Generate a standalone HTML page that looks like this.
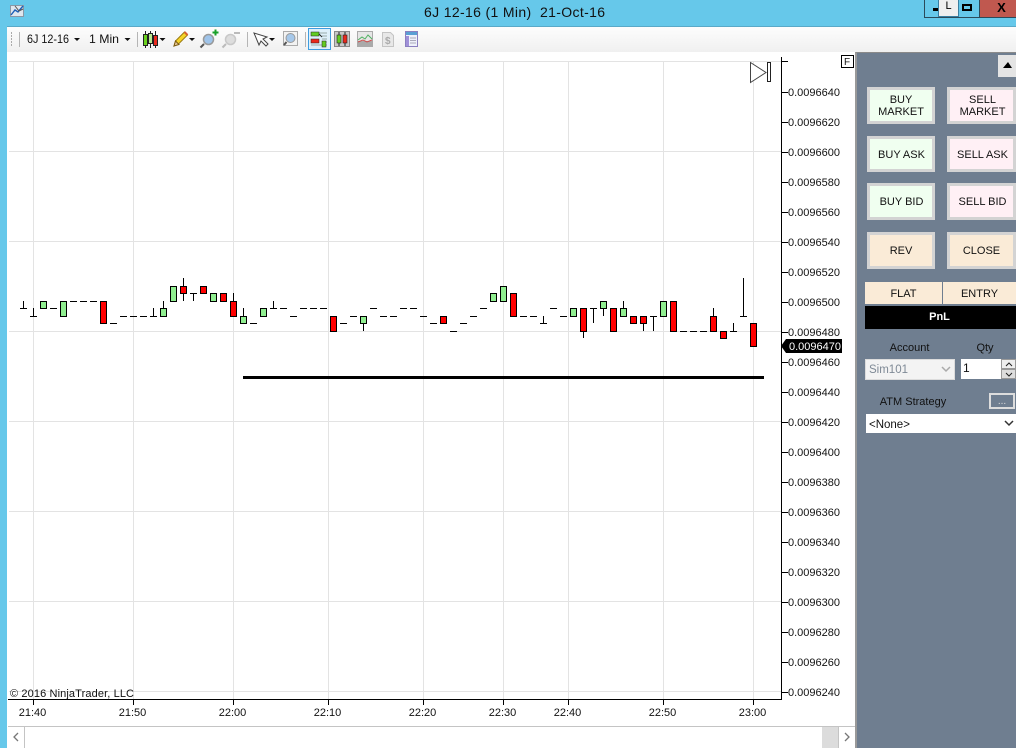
<!DOCTYPE html>
<html><head><meta charset="utf-8"><title>6J 12-16 (1 Min) 21-Oct-16</title>
<style>
html,body{margin:0;padding:0;width:1016px;height:748px;overflow:hidden;background:#fff;font-family:"Liberation Sans",sans-serif;color:#000}
.a{position:absolute;box-sizing:border-box}
.btn{position:absolute;box-sizing:border-box;border:3px solid #d3d3d3;outline:0;display:flex;align-items:center;justify-content:center;text-align:center;font-size:11px;line-height:12px;color:#111}
.g{background:#f0fff0}.p{background:#fff0f5}.o{background:#faebd7}
.lab{position:absolute;font-size:11px;color:#111;text-align:center;line-height:13px}
svg text{font-family:"Liberation Sans",sans-serif}
</style></head><body>
<div class="a" style="left:0;top:0;width:1016px;height:27px;background:#66c8ea;border-bottom:1px solid #5aa9c8"></div>
<div class="a" style="left:0;top:0;width:7px;height:748px;background:#66c8ea"></div>
<div class="a" style="left:7px;top:27px;width:1009px;height:25px;background:linear-gradient(#fdfdfd,#f0f0f0)"></div>
<div class="a" style="left:424px;top:4px;font-size:14px;line-height:16px;white-space:pre;color:#111;letter-spacing:.35px">6J 12-16 (1 Min)  21-Oct-16</div>

<!-- window controls -->
<div class="a" style="left:924px;top:0;width:55px;height:18px;border:1px solid #2b4a5a;border-top:0;border-right:0"></div>
<div class="a" style="left:933px;top:8px;width:5px;height:3px;background:#000"></div>
<div class="a" style="left:938px;top:0;width:21px;height:17px;background:#efefef;border:1px solid #3a7ea0;border-top:0;font-size:11px;text-align:center;line-height:13px">L</div>
<div class="a" style="left:962px;top:4px;width:10px;height:7px;border:2px solid #000"></div>
<div class="a" style="left:979px;top:0;width:37px;height:18px;background:#c0584f;border-left:1px solid #2b4a5a;border-bottom:1px solid #2b4a5a;font:bold 13px/15px 'Liberation Sans',sans-serif;text-align:center;padding-left:7px">X</div>

<!-- app icon + toolbar -->
<svg class="a" style="left:0;top:0" width="430" height="52" viewBox="0 0 430 52">
<rect x="10.5" y="5.5" width="13" height="11" fill="#dfe6ee" stroke="#8a97a5"/>
<path d="M11 15l4-5 3 2 5-6" fill="none" stroke="#1c5fb8" stroke-width="1.4"/>
<path d="M15 6l4 5 4-2" fill="none" stroke="#555" stroke-width="1"/>
<path d="M11 32h1v2h-1zM11 35h1v2h-1zM11 38h1v2h-1zM11 41h1v2h-1zM11 44h1v2h-1z" fill="#aaa"/>
<path d="M19.5 32v15M137.5 32v15M247.5 32v15M305.5 32v15" stroke="#b5b5b5"/>
<text x="27" y="43" font-size="12" fill="#111" textLength="42" lengthAdjust="spacingAndGlyphs">6J 12-16</text>
<path d="M74 38h6l-3 3z" fill="#111"/>
<text x="89" y="43" font-size="12" fill="#111" textLength="30" lengthAdjust="spacingAndGlyphs">1 Min</text>
<path d="M124.500 38h6l-3 3z" fill="#111"/>
<!-- candles icon -->
<path d="M145.500 31v17M150.500 31v17M155.500 31v17" stroke="#222" stroke-width="1"/>
<rect x="143.500" y="34.500" width="4" height="11" fill="#6bd21e" stroke="#222"/>
<rect x="148.500" y="33.500" width="4" height="10" fill="#b8e890" stroke="#222"/>
<rect x="153.500" y="35.500" width="4" height="10" fill="#e92a1e" stroke="#222"/>
<path d="M159.500 38h6l-3 3z" fill="#111"/>
<!-- pencil -->
<path d="M174 46l1.500-5 9-9 3 3-9 9z" fill="#f5d327" stroke="#9a7a10"/>
<path d="M174 46l1.500-5 3.500 3.500z" fill="#e9c998" stroke="#7a5a10"/>
<path d="M184.500 32l3 3" stroke="#d86030" stroke-width="2"/>
<path d="M189 38h6l-3 3z" fill="#111"/>
<!-- zoom in -->
<circle cx="208.500" cy="39.500" r="5" fill="#9fc4ea" stroke="#9a9a9a" stroke-width="1.500"/>
<path d="M204 44l-3.500 3.500" stroke="#555" stroke-width="2"/>
<path d="M212.500 32.500h6M215.500 29.500v6" stroke="#18a028" stroke-width="2"/>
<!-- zoom out -->
<circle cx="230.500" cy="39.500" r="5" fill="#ddd" stroke="#c8c8c8" stroke-width="1.500"/>
<path d="M226 44l-3.500 3.500" stroke="#bbb" stroke-width="2"/>
<path d="M234 33h6" stroke="#bbb" stroke-width="2"/>
<!-- cursor -->
<path d="M254 33l5 12 2-4 5 5 2-2-5-5 4-2z" fill="#fff" stroke="#444"/>
<path d="M269 38h6l-3 3z" fill="#111"/>
<!-- find -->
<rect x="283.500" y="31.500" width="14" height="14" fill="#f2f2f2" stroke="#aaa"/>
<circle cx="290.500" cy="38" r="4.500" fill="#a6c8ea" stroke="#999"/>
<path d="M286.500 42l-2.500 3" stroke="#555" stroke-width="2"/>
<!-- active -->
<rect x="308.500" y="28.500" width="22" height="21" fill="#dff0fb" stroke="#3f9de0"/>
<path d="M311 33h16M322 36h5M322 39h5M322 42h5M311 45h16" stroke="#9aa" stroke-width="1"/>
<rect x="311" y="32" width="8" height="4" fill="#62cc22" stroke="#222" stroke-width=".5"/>
<path d="M319 34l3 3" stroke="#222"/>
<rect x="311" y="39" width="8" height="4" fill="#e9281c" stroke="#222" stroke-width=".5"/>
<rect x="322" y="41" width="4" height="6" fill="#62cc22" stroke="#222" stroke-width=".5"/>
<!-- chart buttons -->
<rect x="334.500" y="31.500" width="15" height="15" fill="#c8c8c8" stroke="#888"/>
<path d="M339 32v14M345 32v14" stroke="#222"/>
<rect x="337" y="35" width="4" height="8" fill="#62cc22" stroke="#222" stroke-width=".6"/>
<rect x="343" y="35" width="4" height="8" fill="#e9281c" stroke="#222" stroke-width=".6"/>
<rect x="357.500" y="31.500" width="15" height="15" fill="#e6e6e6" stroke="#aaa"/>
<rect x="358" y="41" width="14" height="5" fill="#aaa"/>
<path d="M358 40l4-3 3 2 3-4 4 4" fill="none" stroke="#4fb060"/><path d="M358 42l5-2 4 2 5-2" fill="none" stroke="#d05050"/>
<path d="M382.500 32.500h8l3 3v11h-11z" fill="#e8e8e8" stroke="#c4c4c4"/>
<text x="385" y="44" font-size="10" font-weight="bold" fill="#aaa">$</text>
<rect x="405.500" y="31.500" width="12" height="15" fill="#eef0fa" stroke="#8a7fc0"/>
<rect x="406" y="32" width="11" height="3" fill="#5a9fd4"/>
<rect x="406" y="36" width="3" height="10" fill="#a090d8"/>
<path d="M410 38h6M410 40.500h6M410 43h6" stroke="#aab"/>
</svg>

<!-- chart -->
<svg class="a" style="left:8px;top:52px" width="848" height="696" viewBox="8 52 848 696">
<path d="M9 61.500H781M9 151.500H781M9 241.500H781M9 331.500H781M9 421.500H781M9 511.500H781M9 601.500H781M9 691.500H781M33.500 61V699M133.500 61V699M233.500 61V699M328.500 61V699M423.500 61V699M503.500 61V699M568.500 61V699M663.500 61V699M753.500 61V699" stroke="#e3e3e3" fill="none"/>

<g fill="none" stroke="#000">
<path d="M20 308.500h7M23.500 301v7M30 316.500h7M33.500 308v8M50 308.500h7M70 301.500h7M80 301.500h7M90 301.500h7M110 323.500h7M120 316.500h7M130 316.500h7M140 316.500h7M150 316.500h7M153.500 308v8M163.500 301v7M183.500 278v8M183.500 293v8M190 293.500h7M193.500 293v8M233.500 293v8M243.500 308v8M250 323.500h7M270 308.500h7M273.500 301v7M280 308.500h7M290 316.500h7M300 308.500h7M310 308.500h7M320 308.500h7M340 323.500h7M350 316.500h7M363.500 323v8M370 308.500h7M380 316.500h7M390 316.500h7M400 308.500h7M410 308.500h7M420 316.500h7M430 323.500h7M450 331.500h7M460 323.500h7M470 316.500h7M480 308.500h7M520 316.500h7M530 316.500h7M540 323.500h7M543.500 316v7M550 308.500h7M560 316.500h7M583.500 331v7M590 308.500h7M593.500 308v15M603.500 308v8M623.500 301v7M643.500 323v8M650 316.500h7M653.500 316v15M680 331.500h7M690 331.500h7M700 331.500h7M713.500 308v8M730 331.500h7M733.500 323v8M740 316.500h7M743.500 278v38"/>
<g fill="#90ee90">
<rect x="40.500" y="301.500" width="6" height="7"/><rect x="60.500" y="301.500" width="6" height="15"/><rect x="160.500" y="308.500" width="6" height="8"/><rect x="170.500" y="286.500" width="6" height="15"/><rect x="210.500" y="293.500" width="6" height="8"/><rect x="240.500" y="316.500" width="6" height="7"/><rect x="260.500" y="308.500" width="6" height="8"/><rect x="360.500" y="316.500" width="6" height="7"/><rect x="490.500" y="293.500" width="6" height="8"/><rect x="500.500" y="286.500" width="6" height="15"/><rect x="570.500" y="308.500" width="6" height="8"/><rect x="600.500" y="301.500" width="6" height="7"/><rect x="620.500" y="308.500" width="6" height="8"/><rect x="660.500" y="301.500" width="6" height="15"/>
</g>
<g fill="#ff0000">
<rect x="100.500" y="301.500" width="6" height="22"/><rect x="180.500" y="286.500" width="6" height="7"/><rect x="200.500" y="286.500" width="6" height="7"/><rect x="220.500" y="293.500" width="6" height="8"/><rect x="230.500" y="301.500" width="6" height="15"/><rect x="330.500" y="316.500" width="6" height="15"/><rect x="440.500" y="316.500" width="6" height="7"/><rect x="510.500" y="293.500" width="6" height="23"/><rect x="580.500" y="308.500" width="6" height="23"/><rect x="610.500" y="308.500" width="6" height="23"/><rect x="630.500" y="316.500" width="6" height="7"/><rect x="640.500" y="316.500" width="6" height="7"/><rect x="670.500" y="301.500" width="6" height="30"/><rect x="710.500" y="316.500" width="6" height="15"/><rect x="720.500" y="331.500" width="6" height="7"/><rect x="750.500" y="323.500" width="6" height="23"/>
</g>
</g>

<rect x="243" y="376" width="521" height="3" fill="#000"/>

<path d="M750.500 62.500L766 72.500 750.500 82.500Z" fill="#fff" stroke="#444"/>
<rect x="767.500" y="62.500" width="3" height="19" fill="#fff" stroke="#222"/>

<!-- axes -->
<path d="M8 699.500H781.500M781.500 57V700M33.500 699v6M133.500 699v6M233.500 699v6M328.500 699v6M423.500 699v6M503.500 699v6M568.500 699v6M663.500 699v6M753.500 699v6" stroke="#000" fill="none"/>
<path d="M781 61.500h7M781 92.500h7M781 122.500h7M781 152.500h7M781 182.500h7M781 212.500h7M781 242.500h7M781 272.500h7M781 302.500h7M781 332.500h7M781 362.500h7M781 392.500h7M781 422.500h7M781 452.500h7M781 482.500h7M781 512.500h7M781 542.500h7M781 572.500h7M781 602.500h7M781 632.500h7M781 662.500h7M781 692.500h7" stroke="#000"/>
<g font-size="11" fill="#111">
<text x="788" y="96">0.0096640</text><text x="788" y="126">0.0096620</text><text x="788" y="156">0.0096600</text><text x="788" y="186">0.0096580</text><text x="788" y="216">0.0096560</text><text x="788" y="246">0.0096540</text><text x="788" y="276">0.0096520</text><text x="788" y="306">0.0096500</text><text x="788" y="336">0.0096480</text><text x="788" y="366">0.0096460</text><text x="788" y="396">0.0096440</text><text x="788" y="426">0.0096420</text><text x="788" y="456">0.0096400</text><text x="788" y="486">0.0096380</text><text x="788" y="516">0.0096360</text><text x="788" y="546">0.0096340</text><text x="788" y="576">0.0096320</text><text x="788" y="606">0.0096300</text><text x="788" y="636">0.0096280</text><text x="788" y="666">0.0096260</text><text x="788" y="696">0.0096240</text>
</g>
<path d="M781 346l5-7h56v14h-56z" fill="#000"/>
<text x="789" y="350" font-size="11" fill="#fff">0.0096470</text>
<g font-size="11" fill="#111" text-anchor="middle">
<text x="32.500" y="716">21:40</text><text x="132.500" y="716">21:50</text><text x="232.500" y="716">22:00</text><text x="327.500" y="716">22:10</text><text x="422.500" y="716">22:20</text><text x="502.500" y="716">22:30</text><text x="567.500" y="716">22:40</text><text x="662.500" y="716">22:50</text><text x="752.500" y="716">23:00</text>
</g>
<text x="10" y="697" font-size="11" fill="#111" textLength="124">© 2016 NinjaTrader, LLC</text>

<rect x="841.500" y="55.500" width="12" height="12" fill="#fff" stroke="#000"/>
<text x="844" y="65" font-size="10" fill="#111">F</text>

<!-- scrollbar -->
<path d="M8 726.500H856M24.500 727V748M838.500 727V748" stroke="#c4c4c4"/>
<rect x="822" y="727" width="16" height="21" fill="#dcdcdc"/>
<path d="M18 733l-4 4 4 4" fill="none" stroke="#777" stroke-width="1.300"/>
<path d="M845 733l4 4-4 4" fill="none" stroke="#777" stroke-width="1.300"/>
</svg>

<!-- right panel -->
<div class="a" style="left:855px;top:52px;width:161px;height:696px;background:#6f7e90;border-left:2px solid #999;border-top:1px solid #8a8a8a"></div>
<div class="a" style="left:998px;top:55px;width:18px;height:22px;background:#e4e4e4"></div>
<div class="a" style="left:1003px;top:62px;width:0;height:0;border-left:5px solid transparent;border-right:4px solid transparent;border-bottom:6px solid #000"></div>

<div class="btn g" style="left:867px;top:87px;width:68px;height:37px">BUY<br>MARKET</div>
<div class="btn p" style="left:947px;top:87px;width:69px;height:37px;padding-left:2px">SELL<br>MARKET</div>
<div class="btn g" style="left:867px;top:136px;width:68px;height:36px;padding:1px 0 0 1px">BUY ASK</div>
<div class="btn p" style="left:947px;top:136px;width:69px;height:36px;padding:1px 0 0 2px">SELL ASK</div>
<div class="btn g" style="left:867px;top:183px;width:68px;height:37px;padding:1px 0 0 1px">BUY BID</div>
<div class="btn p" style="left:947px;top:183px;width:69px;height:37px;padding:1px 0 0 2px">SELL BID</div>
<div class="btn o" style="left:867px;top:232px;width:68px;height:37px">REV</div>
<div class="btn o" style="left:947px;top:232px;width:69px;height:37px">CLOSE</div>

<div class="a" style="left:865px;top:282px;width:77px;height:22px;background:#faebd7;font-size:11px;line-height:24px;text-align:center;color:#111">FLAT</div>
<div class="a" style="left:943px;top:282px;width:73px;height:22px;background:#faebd7;font-size:11px;line-height:24px;text-align:center;color:#111">ENTRY</div>
<div class="a" style="left:865px;top:306px;width:151px;height:23px;background:#000;color:#fff;font-size:11px;font-weight:bold;line-height:22px;text-align:center;padding-right:2px">PnL</div>

<div class="lab" style="left:865px;top:342px;width:89px">Account</div>
<div class="lab" style="left:960px;top:342px;width:50px">Qty</div>
<div class="a" style="left:865px;top:359px;width:90px;height:21px;background:#f3f3f3;border:1px solid #dcdcdc;color:#7f8a96;font-size:11.500px;line-height:21px;padding-left:3px">Sim101</div>
<svg class="a" style="left:941px;top:366px" width="10" height="7"><path d="M1 1l4 4 4-4" fill="none" stroke="#aaa" stroke-width="1.500"/></svg>
<div class="a" style="left:961px;top:359px;width:40px;height:20px;background:#fff;font-size:12px;line-height:19px;padding-left:2px;color:#111">1</div>
<div class="a" style="left:1001px;top:359px;width:15px;height:10px;background:#eee;border:1px solid #999"></div>
<div class="a" style="left:1001px;top:369px;width:15px;height:10px;background:#ddd;border:1px solid #999"></div>
<svg class="a" style="left:1004px;top:361px" width="10" height="17"><path d="M2 5l3-3 3 3M2 12l3 3 3-3" fill="none" stroke="#222"/></svg>

<div class="lab" style="left:868px;top:396px;width:90px">ATM Strategy</div>
<div class="a" style="left:989px;top:393px;width:26px;height:16px;background:#6f7e90;border:2px solid #ddd;color:#ddd;font-size:10px;line-height:13px;text-align:center">...</div>
<div class="a" style="left:866px;top:414px;width:150px;height:19px;background:#fff;font-size:11.500px;line-height:23px;padding-left:3px;color:#111">&lt;None&gt;</div>
<svg class="a" style="left:1004px;top:420px" width="10" height="7"><path d="M1 1l4 4 4-4" fill="none" stroke="#333" stroke-width="1.500"/></svg>
</body></html>
